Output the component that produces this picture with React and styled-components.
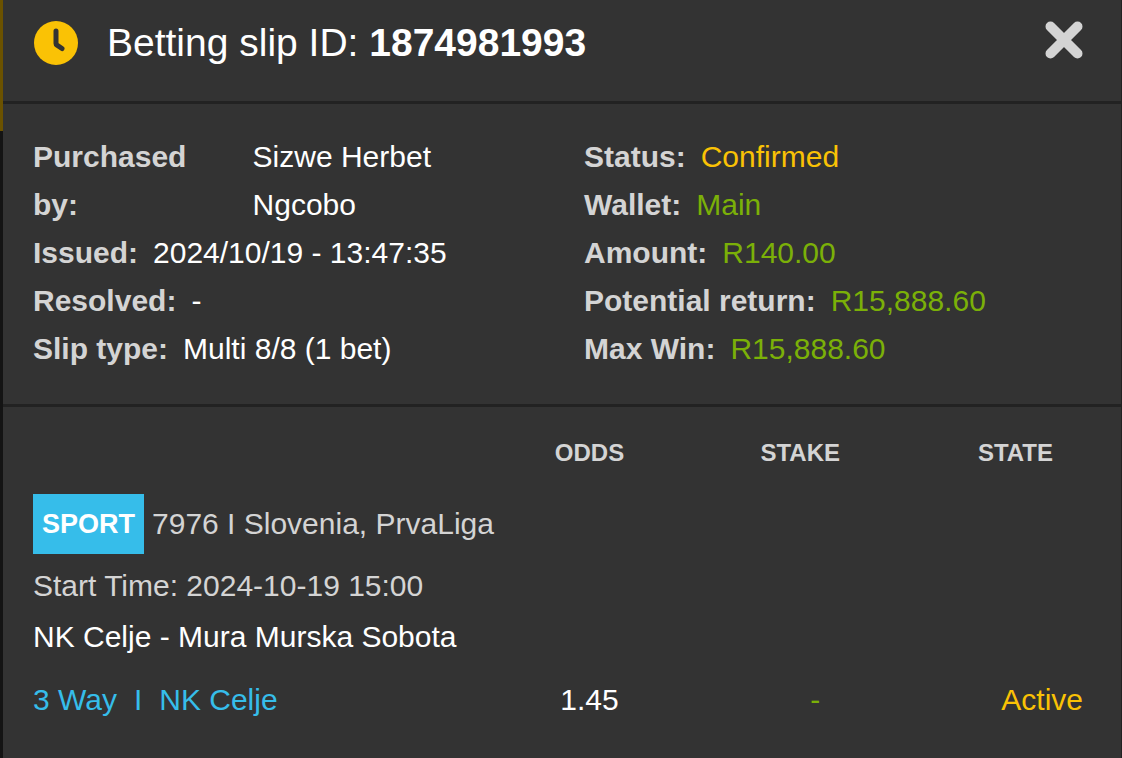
import React from "react";
import styled, { createGlobalStyle } from "styled-components";

const purchaseInfo = [
  { label: "Issued:", value: "2024/10/19 - 13:47:35" },
  { label: "Resolved:", value: "-" },
  { label: "Slip type:", value: "Multi 8/8 (1 bet)" },
];

const walletInfo = [
  { label: "Status:", value: "Confirmed", color: "var(--yellow)" },
  { label: "Wallet:", value: "Main", color: "var(--green)" },
  { label: "Amount:", value: "R140.00", color: "var(--green)" },
  { label: "Potential return:", value: "R15,888.60", color: "var(--green)" },
  { label: "Max Win:", value: "R15,888.60", color: "var(--green)" },
];

const App = () => {
  return (
    <Backdrop>
      <GlobalStyle />
      <Modal>
        <Header>
          <ClockIcon viewBox="0 0 44 44" aria-hidden="true">
            <circle cx="22" cy="22" r="22" />
            <path d="M22 10V22.5Q22 23.5 23 24.2L28 27.5" />
          </ClockIcon>
          <Title>
            Betting slip ID: <b>1874981993</b>
          </Title>
          <CloseButton type="button" aria-label="Close">
            <svg viewBox="0 0 38 38" aria-hidden="true">
              <path d="M5.5 5.5L32.5 32.5M32.5 5.5L5.5 32.5" />
            </svg>
          </CloseButton>
        </Header>
        <Info>
          <List>
            <Row>
              <WideLabel>Purchased by:</WideLabel>
              <Value>Sizwe Herbet Ngcobo</Value>
            </Row>
            {purchaseInfo.map(({ label, value }) => (
              <Row key={label}>
                <Label>{label}</Label>
                <Value>{value}</Value>
              </Row>
            ))}
          </List>
          <List>
            {walletInfo.map(({ label, value, color }) => (
              <Row key={label}>
                <Label>{label}</Label>
                <Value $color={color}>{value}</Value>
              </Row>
            ))}
          </List>
        </Info>
        <Bets>
          <Table>
            <thead>
              <tr>
                <Th $width="42%" />
                <Th $width="22%">ODDS</Th>
                <Th $width="21%" $inset>STAKE</Th>
                <Th $width="15%" $inset $align="right">STATE</Th>
              </tr>
            </thead>
            <tbody>
              <tr>
                <Event colSpan={4}>
                  <League>
                    <Badge>SPORT</Badge>
                    <span>7976 I Slovenia, PrvaLiga</span>
                  </League>
                  <StartTime>Start Time: 2024-10-19 15:00</StartTime>
                  <Match>NK Celje - Mura Murska Sobota</Match>
                </Event>
              </tr>
              <tr>
                <Td $align="left" $color="var(--blue)">
                  <Pick>
                    <span>3 Way</span>
                    <span>I</span>
                    <span>NK Celje</span>
                  </Pick>
                </Td>
                <Td>1.45</Td>
                <Td $color="var(--green)">-</Td>
                <Td $align="right" $color="var(--yellow)">Active</Td>
              </tr>
            </tbody>
          </Table>
        </Bets>
      </Modal>
    </Backdrop>
  );
};

const GlobalStyle = createGlobalStyle`
  :root {
    --panel: #333333;
    --line: #222222;
    --gray: #d4d4d4;
    --white: #ffffff;
    --yellow: #fac205;
    --green: #7bb008;
    --blue: #36bdea;
  }

  * {
    box-sizing: border-box;
  }

  body {
    margin: 0;
    background-color: var(--panel);
    font-family: "Liberation Sans", Arial, sans-serif;
    font-size: 30px;
    color: var(--white);
  }
`;

const Backdrop = styled.div`
  display: flex;
  min-height: 100vh;
  padding-left: 3px;
  border-right: 1px solid var(--line);
  background: linear-gradient(#6b5200 131px, #141414 131px);
`;

const Modal = styled.main`
  flex: 1;
  background-color: var(--panel);
`;

const Header = styled.header`
  display: flex;
  align-items: center;
  padding: 21px 38px 36px 31px;
  border-bottom: 3px solid var(--line);
`;

const ClockIcon = styled.svg`
  width: 44px;
  height: 44px;
  fill: var(--yellow);

  path {
    fill: none;
    stroke: var(--panel);
    stroke-width: 5;
    stroke-linecap: round;
    stroke-linejoin: round;
  }
`;

const Title = styled.h1`
  flex: 1;
  margin: 0 0 0 29px;
  font-size: 39px;
  font-weight: normal;
  line-height: 44px;
`;

const CloseButton = styled.button`
  width: 38px;
  height: 38px;
  margin-bottom: 6px;
  padding: 0;
  border: none;
  background: none;
  cursor: pointer;

  svg {
    display: block;
    stroke: var(--gray);
    stroke-width: 10;
    stroke-linecap: round;
  }
`;

const Info = styled.section`
  display: grid;
  grid-template-columns: 1fr 1fr;
  column-gap: 52px;
  padding: 29px 38px 31px 30px;
  border-bottom: 3px solid var(--line);
  line-height: 48px;
`;

const List = styled.dl`
  margin: 0;
`;

const Row = styled.div`
  display: flex;
  gap: 15px;
`;

const Label = styled.dt`
  flex: none;
  font-weight: bold;
  color: var(--gray);
`;

const WideLabel = styled(Label)`
  width: 41%;
  padding-right: 20px;
`;

const Value = styled.dd`
  margin: 0;
  color: ${({ $color }) => $color || "var(--white)"};
`;

const Bets = styled.section`
  padding: 30px 38px 30px 30px;
`;

const Table = styled.table`
  width: 100%;
  border-collapse: collapse;
  table-layout: fixed;
`;

const Th = styled.th`
  width: ${({ $width }) => $width};
  padding: 0 ${({ $inset }) => ($inset ? "30px" : "0")} 25px 0;
  font-size: 24px;
  line-height: 32px;
  text-align: ${({ $align }) => $align || "center"};
  color: var(--gray);
`;

const Event = styled.td`
  padding: 0;
`;

const League = styled.div`
  display: flex;
  align-items: center;
  gap: 8px;
  color: var(--gray);
`;

const Badge = styled.strong`
  padding: 0 9px;
  background-color: var(--blue);
  font-size: 27px;
  line-height: 60px;
  color: var(--white);
`;

const StartTime = styled.div`
  margin-top: 6px;
  line-height: 51px;
  color: var(--gray);
`;

const Match = styled.div`
  line-height: 51px;
`;

const Td = styled.td`
  padding: 12px 0;
  line-height: 51px;
  text-align: ${({ $align }) => $align || "center"};
  color: ${({ $color }) => $color || "var(--white)"};
`;

const Pick = styled.div`
  display: flex;
  gap: 17px;
`;

export default App;
